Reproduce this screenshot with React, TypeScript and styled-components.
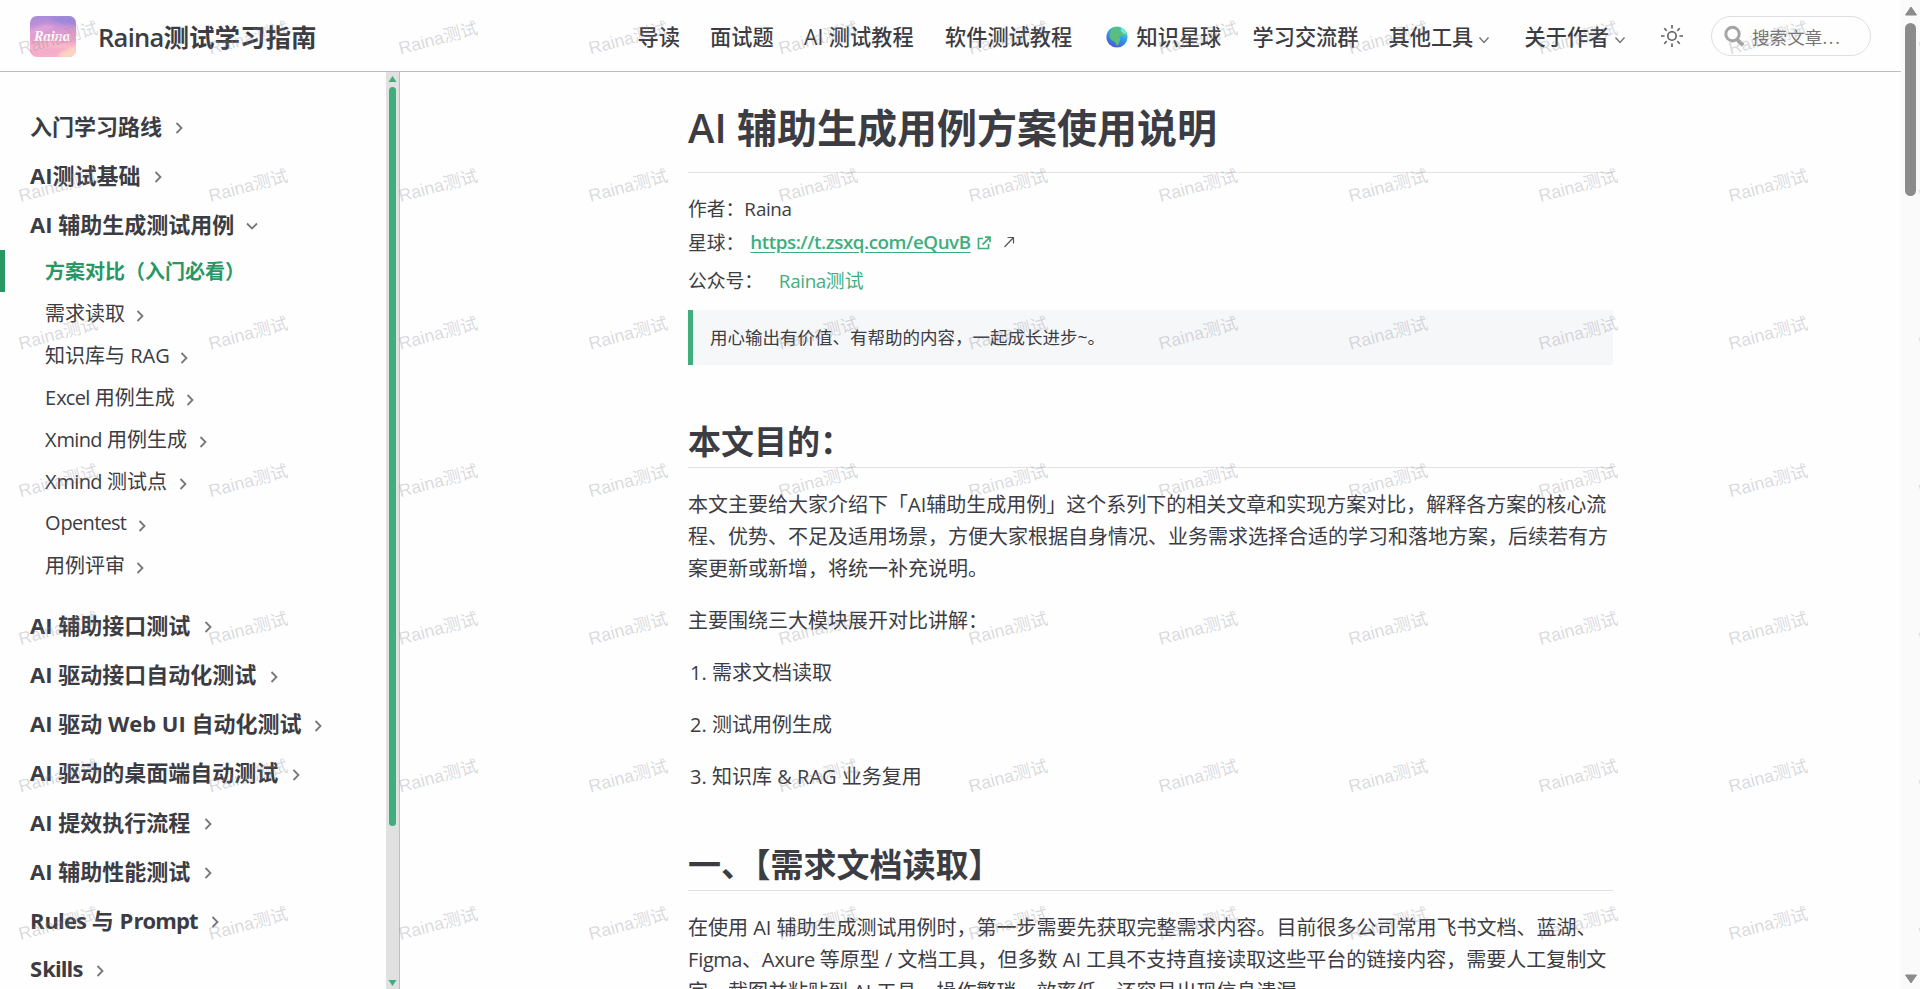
import React from 'react';
import styled, { createGlobalStyle, css } from 'styled-components';

const GlobalStyle = createGlobalStyle`
  * { box-sizing: border-box; }
  html, body { margin: 0; padding: 0; overflow: hidden; background: #fefefe; }
  body { font-family: "Open Sans", "Noto Sans CJK SC", sans-serif; color: #3c3c43; }
  a { text-decoration: none; color: inherit; }
`;

const Page = styled.div`
  position: relative;
  display: grid;
  grid-template-columns: 1fr 19px;
  width: 1920px;
  height: 989px;
  overflow: hidden;
`;

const Shell = styled.div`
  display: flex;
  flex-direction: column;
  min-width: 0;
  height: 989px;
`;

const Header = styled.header`
  display: flex;
  align-items: center;
  flex: none;
  height: 72px;
  padding: 1px 30px 0 30px;
  border-bottom: 1px solid #bcbfbd;
`;

const Brand = styled.div`
  display: flex;
  align-items: center;
  gap: 22px;
  font-size: 25.500px;
  font-weight: 600;
  line-height: 36px;
`;

const BrandName = styled.span`
  padding-top: 1px;
`;

const Tight = styled.span<{ $ls: number; $weight?: number }>`
  letter-spacing: ${(p) => p.$ls}em;
  ${(p) => p.$weight && css`font-weight: ${p.$weight};`}
`;

const Nav = styled.nav`
  display: flex;
  align-items: center;
  margin-left: auto;
  padding-top: 1px;
  font-size: 21.200px;
  font-weight: 500;
  line-height: 32px;
`;

const NavItem = styled.a<{ $w: number }>`
  display: flex;
  align-items: center;
  flex: none;
  width: ${(p) => p.$w}px;
  white-space: nowrap;
`;

const Search = styled.div`
  display: flex;
  align-items: center;
  gap: 7px;
  width: 160px;
  height: 40px;
  margin-left: 27px;
  padding: 0 12px;
  border: 1px solid #dcdfe3;
  border-radius: 20px;
  color: #757575;
  font-size: 17.6px;
  white-space: nowrap;
`;

const Body = styled.div`
  display: flex;
  flex: 1;
  min-height: 0;
`;

const Sidebar = styled.aside`
  display: flex;
  flex: none;
  width: 400px;
  border-right: 1px solid #bcbfbd;
`;

const Menu = styled.div`
  flex: 1;
  min-width: 0;
  padding-top: 28px;
  overflow: hidden;
`;

const Group = styled.div`
  display: flex;
  align-items: center;
  height: 49.15px;
  padding-left: 30px;
  font-size: 22px;
  font-weight: 700;
  white-space: nowrap;
`;

const SubList = styled.div`
  padding: 2.500px 0 13.500px;
`;

const SubItem = styled.div<{ $active?: boolean }>`
  display: flex;
  align-items: center;
  height: 42px;
  padding-left: ${(p) => (p.$active ? 40 : 45)}px;
  font-size: 20px;
  white-space: nowrap;
  ${(p) =>
    p.$active &&
    css`
      border-left: 5px solid #299764;
      color: #299764;
      font-weight: 700;
    `}
`;

const Label = styled.span<{ $w: number }>`
  width: ${(p) => p.$w}px;
`;

const Track = styled.div<{ $bg: string; $w: number }>`
  display: flex;
  flex-direction: column;
  align-items: center;
  justify-content: space-between;
  flex: none;
  width: ${(p) => p.$w}px;
  background: ${(p) => p.$bg};
`;

const TrackTop = styled.div`
  display: flex;
  flex-direction: column;
  align-items: center;
`;

const Thumb = styled.div<{ $c: string; $w: number; $h: number }>`
  width: ${(p) => p.$w}px;
  height: ${(p) => p.$h}px;
  border-radius: 6px;
  background: ${(p) => p.$c};
`;

const Arrow = styled.svg`
  display: block;
`;

const Main = styled.main`
  flex: 1;
  min-width: 0;
  padding-left: 288px;
  overflow: hidden;
`;

const Article = styled.article`
  width: 925px;
  font-size: 20px;
`;

const H1 = styled.h1`
  height: 101px;
  margin: 0;
  padding-top: 29px;
  border-bottom: 1px solid #e2e2e3;
  font-size: 40px;
  font-weight: 600;
  line-height: 53px;
`;

const MetaBlock = styled.div`
  padding-top: 18px;
`;

const Meta = styled.div<{ $h: number }>`
  display: flex;
  align-items: center;
  height: ${(p) => p.$h}px;
  font-size: 18.8px;
`;

const MetaLink = styled.a`
  margin-left: 6px;
  color: #3eaf7c;
  font-weight: 600;
  letter-spacing: -0.460px;
  text-decoration: underline;
  text-underline-offset: 3px;
`;

const Account = styled.span`
  margin-left: 15.500px;
  color: #3eaf7c;
`;

const Quote = styled.div`
  display: flex;
  align-items: center;
  height: 55px;
  margin-top: 10px;
  padding: 0 0 2px 17px;
  border-left: 5px solid #3eaf7c;
  background: #f6f7f9;
  font-size: 17.5px;
`;

const H2 = styled.h2<{ $top: number }>`
  height: 49px;
  margin: ${(p) => p.$top}px 0 0;
  border-bottom: 1px solid #e2e2e3;
  font-size: 33px;
  font-weight: 600;
  line-height: 45px;
  white-space: nowrap;
`;

const P = styled.p<{ $lead?: boolean }>`
  margin: ${(p) => (p.$lead ? 21 : 20)}px 0 0;
  line-height: 32px;
  white-space: nowrap;
`;

const Line = styled.span`
  display: block;
`;

const Ordered = styled.ol`
  margin: 20px 0 0;
  padding-left: 24px;
`;

const Step = styled.li`
  height: 32px;
  margin-bottom: 20px;
  line-height: 32px;
`;

const Overlay = styled.svg`
  position: absolute;
  inset: 0;
  pointer-events: none;
`;

const ChevronIcon = styled.svg`
  margin-top: 7px;
`;

const NavChevronIcon = styled.svg`
  margin: 6px 0 0 5px;
`;

const GlobeIcon = styled.svg`
  margin-right: 9px;
`;

const ExternalIcon = styled.svg`
  margin: 1px 0 0 6px;
`;

const NorthEastIcon = styled.svg`
  margin: 0 0 1px 12px;
`;

/* Lowercase Latin runs are set slightly tighter than the surrounding text. */
const mixed = (text: string, ls: number) =>
  text.split(/([a-z]+)/).map((part, i) => (i % 2 ? <Tight key={i} $ls={ls}>{part}</Tight> : part));

const Chevron = ({ down }: { down?: boolean }) => (
  <ChevronIcon width="14" height="14" viewBox="0 0 14 14" fill="none" stroke="#77777c" strokeWidth="1.8">
    <path d={down ? 'M2 4.5l5 5 5-5' : 'M4.5 2l5 5-5 5'} />
  </ChevronIcon>
);

const NavChevron = () => (
  <NavChevronIcon width="12" height="12" viewBox="0 0 12 12" fill="none" stroke="#77777c" strokeWidth="1.5">
    <path d="M1.500 3.500L6 8.500l4.500-5" />
  </NavChevronIcon>
);

const Logo = () => (
  <svg width="46" height="41" viewBox="0 0 46 41">
    <defs>
      <linearGradient id="sky" x1="0" y1="0" x2="0.15" y2="1">
        <stop offset="0" stopColor="#a58bd8" />
        <stop offset="0.3" stopColor="#c592d8" />
        <stop offset="0.6" stopColor="#ee9fcb" />
        <stop offset="1" stopColor="#f6b0c8" />
      </linearGradient>
      <filter id="soft"><feGaussianBlur stdDeviation="1.6" /></filter>
      <clipPath id="logoClip"><rect width="46" height="41" rx="7" /></clipPath>
    </defs>
    <g clipPath="url(#logoClip)">
      <rect width="46" height="41" fill="url(#sky)" />
      <g filter="url(#soft)">
        <path d="M-2 14L16 8l10 3-12 6-16 4z" fill="#e8a5d8" opacity="0.7" />
        <path d="M18 2l30-4v12L30 8z" fill="#8f84da" opacity="0.7" />
        <path d="M0 29l20-3 26 3v4L20 32 0 35z" fill="#fbbccb" opacity="0.8" />
        <path d="M30 37l18-8v14H28z" fill="#fbd8bd" opacity="0.9" />
      </g>
      <text x="4" y="25" fill="#fff" fontFamily="'Liberation Serif', serif" fontStyle="italic" fontWeight="700" fontSize="15.5" textLength="36" lengthAdjust="spacingAndGlyphs">Raina</text>
    </g>
  </svg>
);

const Globe = () => (
  <GlobeIcon width="22" height="22" viewBox="0 0 22 22">
    <defs>
      <linearGradient id="sea" x1="0.8" y1="0" x2="0.3" y2="1">
        <stop offset="0" stopColor="#4fe0d8" />
        <stop offset="0.5" stopColor="#2f9bea" />
        <stop offset="1" stopColor="#4a56d0" />
      </linearGradient>
    </defs>
    <circle cx="11" cy="11" r="10.6" fill="url(#sea)" />
    <path d="M5 4C7 1.500 11 .5 14 1.500l.5 2-2.500 1 1 2 3-.5 2.500 2.500-1.500 1.500-3-.5-1 1.500 1.500 2-1.500 4.500-2 2.500-2-4-3-1.500-2.500-3 .5-4z" fill="#5bbd7e" />
    <path d="M15 1.500l4 3 1.500 4-3-1-2-2z" fill="#7df0a6" />
  </GlobeIcon>
);

const Sun = () => (
  <svg width="24" height="24" viewBox="0 0 24 24" fill="none" stroke="#5c5c62" strokeWidth="1.6">
    <circle cx="12" cy="12" r="4.200" />
    <path d="M12 1v3.600M12 19.400V23M1 12h3.600M19.400 12H23M4.200 4.200l2.500 2.500M17.300 17.300l2.500 2.500M4.200 19.800l2.500-2.500M17.300 6.700l2.500-2.500" />
  </svg>
);

const SearchIcon = () => (
  <svg width="21" height="22" viewBox="0 0 21 22" fill="none" stroke="#a5a5a5" strokeWidth="3">
    <circle cx="8.500" cy="9" r="6.700" />
    <path d="M13 14l6 6.500" strokeWidth="3.600" />
  </svg>
);

const External = () => (
  <ExternalIcon width="14" height="14" viewBox="0 0 14 14" fill="none" stroke="#3eaf7c" strokeWidth="1.700">
    <path d="M6 2.500H1.500v10h10V8M8 1.200h5v5M12.500 1.700L5.500 8.700" />
  </ExternalIcon>
);

const NorthEast = () => (
  <NorthEastIcon width="12" height="12" viewBox="0 0 12 12" fill="none" stroke="#55555c" strokeWidth="1.200">
    <path d="M1.500 11L10.500 1.500M4.500 1.500h6v6" />
  </NorthEastIcon>
);

const nav = [
  { text: '导读', w: 72.500 },
  { text: '面试题', w: 94 },
  { text: 'AI 测试教程', w: 141 },
  { text: '软件测试教程', w: 160.500 },
  { text: '知识星球', w: 147, globe: true },
  { text: '学习交流群', w: 136 },
  { text: '其他工具', w: 136, menu: true },
  { text: '关于作者', w: 135.500, menu: true },
];

const top = [
  { text: '入门学习路线', w: 142 },
  { text: 'AI测试基础', w: 121 },
];

const sub = [
  { text: '需求读取', w: 88 },
  { text: '知识库与 RAG', w: 132 },
  { text: 'Excel 用例生成', w: 138 },
  { text: 'Xmind 用例生成', w: 151 },
  { text: 'Xmind 测试点', w: 131 },
  { text: 'Opentest', w: 90 },
  { text: '用例评审', w: 88 },
];

const rest = [
  { text: 'AI 辅助接口测试', w: 171 },
  { text: 'AI 驱动接口自动化测试', w: 237 },
  { text: 'AI 驱动 Web UI 自动化测试', w: 281 },
  { text: 'AI 驱动的桌面端自动测试', w: 259 },
  { text: 'AI 提效执行流程', w: 171 },
  { text: 'AI 辅助性能测试', w: 171 },
  { text: 'Rules 与 Prompt', w: 178 },
  { text: 'Skills', w: 63 },
];

const range = (n: number) => Array.from({ length: n }, (_, i) => i);

const Watermark = () => (
  <Overlay width="1920" height="989">
    <g fill="#8c8c96" fillOpacity="0.33" fontFamily="'Liberation Sans', 'Noto Sans CJK SC', sans-serif" fontSize="17.6">
      {range(7).map((r) =>
        range(11).map((c) => (
          <text key={`${r}-${c}`} transform={`translate(${20.500 + c * 190} ${54.500 + r * 147.600}) rotate(-15)`}>Raina测试</text>
        )),
      )}
    </g>
    <g fill="#000" fillOpacity="0.014" fontFamily="'Open Sans', 'Noto Sans CJK SC', sans-serif" fontSize="18">
      {range(9).map((r) =>
        range(18).map((c) => (
          <text key={`${r}-${c}`} transform={`translate(${(r % 2 ? 82 : 24) + (c - 1) * 116.500} ${-34 + r * 116.300}) rotate(46)`}>Raina测试</text>
        )),
      )}
    </g>
  </Overlay>
);

export default function App() {
  return (
    <Page>
      <GlobalStyle />
      <Shell>
        <Header>
          <Brand>
            <Logo />
            <BrandName><Tight $ls={-0.028} $weight={600}>Raina</Tight>测试学习指南</BrandName>
          </Brand>
          <Nav>
            {nav.map((n) => (
              <NavItem key={n.text} $w={n.w}>
                {n.globe && <Globe />}
                {n.text}
                {n.menu && <NavChevron />}
              </NavItem>
            ))}
          </Nav>
          <Sun />
          <Search>
            <SearchIcon />
            <span>搜索文章<Tight $ls={0.1}>...</Tight></span>
          </Search>
        </Header>
        <Body>
          <Sidebar>
            <Menu>
              {top.map((g) => (
                <Group key={g.text}><Label $w={g.w}>{g.text}</Label><Chevron /></Group>
              ))}
              <Group><Label $w={215}>AI 辅助生成测试用例</Label><Chevron down /></Group>
              <SubList>
                <SubItem $active>方案对比（入门必看）</SubItem>
                {sub.map((s) => (
                  <SubItem key={s.text}><Label $w={s.w}>{mixed(s.text, -0.036)}</Label><Chevron /></SubItem>
                ))}
              </SubList>
              {rest.map((g) => (
                <Group key={g.text}><Label $w={g.w}>{mixed(g.text, g.text.includes('Web') ? 0 : -0.04)}</Label><Chevron /></Group>
              ))}
            </Menu>
            <Track $bg="#e1e1e1" $w={13}>
              <TrackTop>
                <Arrow width="9" height="15" viewBox="0 0 9 15"><path d="M4.500 4L8.500 10H.5z" fill="#3eaf7c" /></Arrow>
                <Thumb $c="#3eaf7c" $w={7} $h={739} />
              </TrackTop>
              <Arrow width="9" height="15" viewBox="0 0 9 15"><path d="M4.500 12L8.500 6H.5z" fill="#3eaf7c" /></Arrow>
            </Track>
          </Sidebar>
          <Main>
            <Article>
              <H1>AI 辅助生成用例方案使用说明</H1>
              <MetaBlock>
                <Meta $h={34}><span>作者：{mixed('Raina', -0.02)}</span></Meta>
                <Meta $h={34}>星球：<MetaLink>https://t.zsxq.com/eQuvB</MetaLink><External /><NorthEast /></Meta>
                <Meta $h={41}>公众号：<Account>{mixed('Raina测试', -0.02)}</Account></Meta>
              </MetaBlock>
              <Quote>用心输出有价值、有帮助的内容，一起成长进步~。</Quote>
              <H2 $top={54}>本文目的：</H2>
              <P $lead>
                <Line>本文主要给大家介绍下「AI辅助生成用例」这个系列下的相关文章和实现方案对比，解释各方案的核心流</Line>
                <Line>程、优势、不足及适用场景，方便大家根据自身情况、业务需求选择合适的学习和落地方案，后续若有方</Line>
                <Line>案更新或新增，将统一补充说明。</Line>
              </P>
              <P>主要围绕三大模块展开对比讲解：</P>
              <Ordered>
                <Step>需求文档读取</Step>
                <Step>测试用例生成</Step>
                <Step>知识库 &amp; RAG 业务复用</Step>
              </Ordered>
              <H2 $top={49}>一、【需求文档读取】</H2>
              <P $lead>
                <Line>在使用 AI 辅助生成测试用例时，第一步需要先获取完整需求内容。目前很多公司常用飞书文档、蓝湖、</Line>
                <Line>{mixed('Figma、Axure 等原型 / 文档工具，但多数 AI 工具不支持直接读取这些平台的链接内容，需要人工复制文', -0.025)}</Line>
                <Line>字、截图并粘贴到 AI 工具，操作繁琐、效率低，还容易出现信息遗漏。</Line>
              </P>
            </Article>
          </Main>
        </Body>
      </Shell>
      <Track $bg="#fafafa" $w={19}>
        <TrackTop>
          <Arrow width="14" height="23" viewBox="0 0 14 23"><path d="M7 7L12.500 15h-11z" fill="#8b8b8b" stroke="#8b8b8b" strokeLinejoin="round" /></Arrow>
          <Thumb $c="#8b8b8b" $w={11} $h={173} />
        </TrackTop>
        <Arrow width="14" height="19" viewBox="0 0 14 19"><path d="M7 13L12.500 5h-11z" fill="#8b8b8b" stroke="#8b8b8b" strokeLinejoin="round" /></Arrow>
      </Track>
      <Watermark />
    </Page>
  );
}
